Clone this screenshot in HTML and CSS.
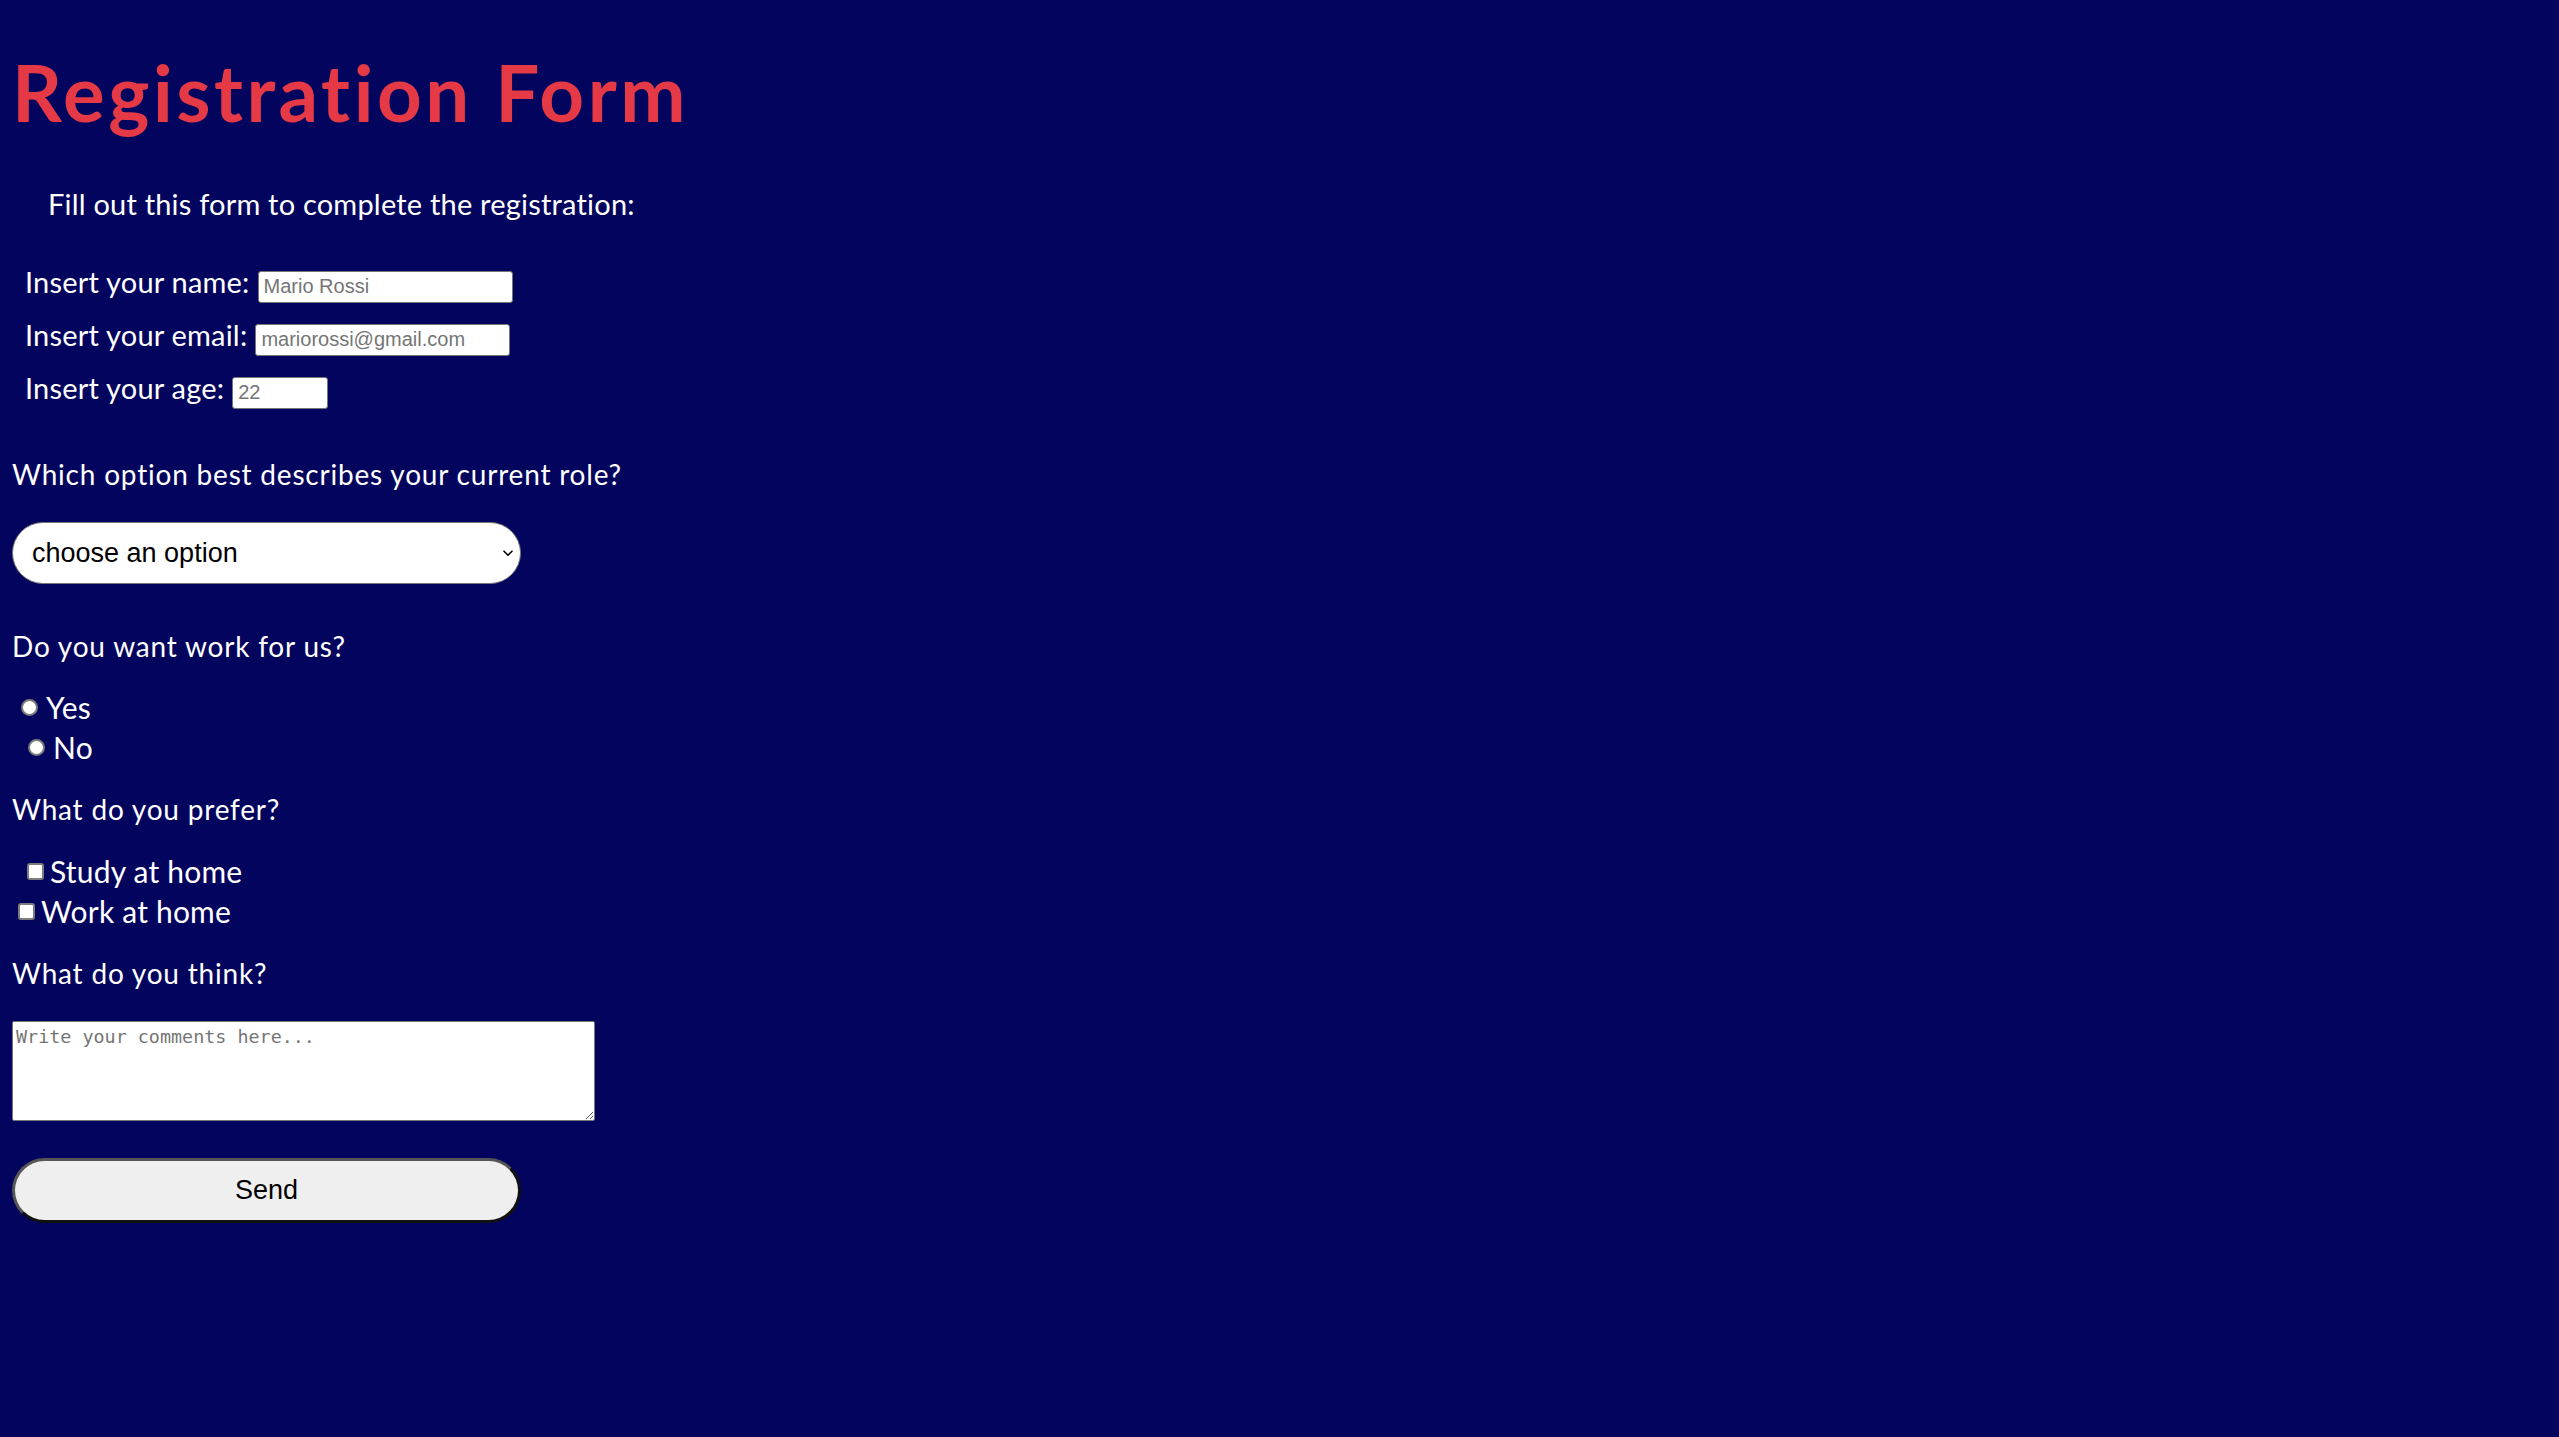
FILE: index.html
```html
<!DOCTYPE html>
<html lang="en">
<head>
<meta charset="utf-8">
<title>Registration Form</title>
<link rel="stylesheet" href="styles.css">
</head>
<body>
<main class="page">
  <h1 class="title">Registration Form</h1>
  <p class="intro">Fill out this form to complete the registration:</p>
  <form class="form">
    <div class="field"><label class="label" for="name">Insert your name:</label><input id="name" class="text-input input-name" type="text" placeholder="Mario Rossi"></div>
    <div class="field"><label class="label" for="email">Insert your email:</label><input id="email" class="text-input input-email" type="email" placeholder="mariorossi@gmail.com"></div>
    <div class="field"><label class="label" for="age">Insert your age:</label><input id="age" class="text-input input-age" type="text" placeholder="22"></div>

    <p class="question q-role">Which option best describes your current role?</p>
    <div class="select-wrap">
      <select class="select">
        <option>choose an option</option>
        <option>Student</option>
        <option>Full-time job</option>
        <option>Other</option>
      </select>
      <svg class="chevron" width="10" height="7" viewBox="0 0 10 7" aria-hidden="true"><path d="M1 1.2 L5 5.2 L9 1.2" fill="none" stroke="#000" stroke-width="1.6" stroke-linecap="round" stroke-linejoin="round"/></svg>
    </div>

    <p class="question q-work">Do you want work for us?</p>
    <label class="option opt-yes"><input class="radio" type="radio" name="work">Yes</label>
    <label class="option opt-no"><input class="radio" type="radio" name="work">No</label>

    <p class="question q-prefer">What do you prefer?</p>
    <label class="option opt-study"><input class="check" type="checkbox">Study at home</label>
    <label class="option opt-home"><input class="check" type="checkbox">Work at home</label>

    <p class="question q-think">What do you think?</p>
    <textarea class="comments" placeholder="Write your comments here..."></textarea>

    <button class="send" type="button">Send</button>
  </form>
</main>
</body>
</html>
```

FILE: styles.css
```css
html, body {
  margin: 0;
  padding: 0;
}

body {
  background: #03045e;
  color: #ffffff;
  font-family: Lato, "Open Sans", sans-serif;
  font-variant-ligatures: none;
  min-height: 1437px;
}

.page {
  padding: 53px 12px 0;
}

.title {
  margin: 0;
  font-size: 78px;
  line-height: 78px;
  font-weight: 700;
  letter-spacing: 3.5px;
  color: #e63946;
}

.intro {
  margin: 55px 0 0;
  padding-left: 36px;
  font-size: 29px;
  line-height: 36px;
  letter-spacing: 0.2px;
}

.form {
  margin-top: 33px;
}

.field {
  display: flex;
  align-items: baseline;
  height: 53px;
  padding-left: 13px;
}

.label {
  font-size: 29px;
  line-height: 53px;
  letter-spacing: 0.2px;
}

.text-input {
  box-sizing: border-box;
  margin-left: 8px;
  height: 32px;
  padding: 0 5px;
  border: 1px solid #767676;
  border-radius: 3px;
  background: #ffffff;
  font-family: "Liberation Sans", Arial, sans-serif;
  font-size: 20px;
  color: #000;
}

.text-input::placeholder {
  color: #757575;
}

.input-name { width: 255px; }
.input-email { width: 255px; }
.input-age { width: 96px; }

.question {
  margin: 0;
  font-size: 28px;
  line-height: 36px;
  letter-spacing: 0.8px;
}

.q-role { margin-top: 42px; }
.q-work { margin-top: 44px; }
.q-prefer { margin-top: 24px; }
.q-think { margin-top: 24px; }

.select-wrap {
  position: relative;
  margin-top: 30px;
  width: 509px;
  height: 62px;
}

.select {
  appearance: none;
  -webkit-appearance: none;
  display: block;
  box-sizing: border-box;
  width: 100%;
  height: 100%;
  padding: 0 30px 0 19px;
  border: 1px solid #767676;
  border-radius: 31px;
  background-color: #ffffff;
  color: #000;
  font-family: "Liberation Sans", Arial, sans-serif;
  font-size: 27px;
}

.chevron {
  position: absolute;
  right: 8px;
  top: 28px;
  pointer-events: none;
}

.option {
  display: flex;
  align-items: center;
  height: 40px;
  font-size: 30px;
  letter-spacing: 0.2px;
}

.opt-yes { margin-top: 23px; padding-left: 9px; }
.opt-no { padding-left: 16px; }
.opt-study { margin-top: 24px; padding-left: 15px; }
.opt-home { padding-left: 6px; }

.radio {
  appearance: none;
  -webkit-appearance: none;
  box-sizing: border-box;
  width: 17px;
  height: 17px;
  margin: 0 8px 0 0;
  border: 2px solid #7c7c7c;
  border-radius: 50%;
  background: #ffffff;
}

.check {
  appearance: none;
  -webkit-appearance: none;
  box-sizing: border-box;
  width: 17px;
  height: 17px;
  margin: 0 6px 0 0;
  border: 2px solid #7c7c7c;
  border-radius: 3px;
  background: #ffffff;
}

.comments {
  display: block;
  box-sizing: border-box;
  margin-top: 30px;
  width: 583px;
  height: 100px;
  padding: 4px 3px;
  border: 1px solid #767676;
  border-radius: 2px;
  background: #ffffff;
  font-family: "DejaVu Sans Mono", "Liberation Mono", monospace;
  font-size: 18.4px;
}

.comments::placeholder {
  color: #757575;
}

.send {
  display: block;
  box-sizing: border-box;
  margin-top: 37px;
  width: 509px;
  height: 65px;
  border: 3px solid;
  border-color: #555555 #111111 #111111 #555555;
  border-radius: 33px;
  background: #efefef;
  color: #000;
  font-family: "Liberation Sans", Arial, sans-serif;
  font-size: 27px;
}
```
